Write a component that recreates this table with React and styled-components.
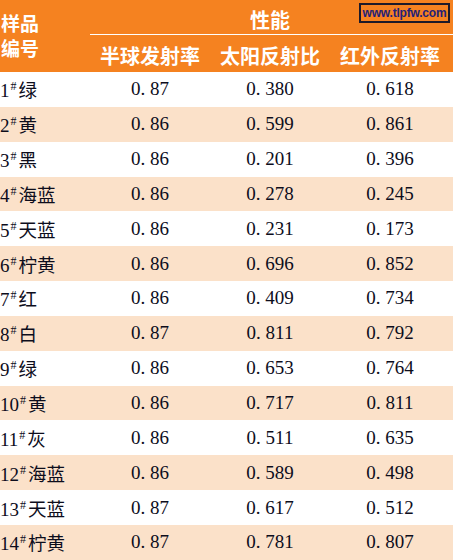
import React from "react";
import styled, { createGlobalStyle } from "styled-components";

const GlobalStyle = createGlobalStyle`
  html, body { margin: 0; padding: 0; background: #ffffff; }
  body { width: 453px; overflow: hidden; }
`;

const ORANGE = "#F58220";
const PEACH = "#FBE1C9";

const Table = styled.div`
  position: relative;
  width: 453px;
  font-family: "Liberation Serif", "Noto Sans CJK SC", serif;
`;

const Header = styled.div`
  display: grid;
  grid-template-columns: 90px 1fr;
  grid-template-rows: 34px 1px 37px;
  background: ${ORANGE};
  color: #ffffff;
  font-family: "Noto Sans CJK SC", sans-serif;
  font-weight: 700;
`;

const RowLabelHead = styled.div`
  grid-row: 1 / 4;
  grid-column: 1;
  padding: 10px 0 0 1px;
  font-size: 19px;
  line-height: 25px;
`;

const GroupHead = styled.div`
  grid-row: 1;
  grid-column: 2;
  display: flex;
  justify-content: center;
  align-items: center;
  padding: 4px 3px 0 0;
  font-size: 20px;
`;

const Rule = styled.div`
  grid-row: 2;
  grid-column: 2;
  background: #ffffff;
`;

const SubHeads = styled.div`
  grid-row: 3;
  grid-column: 2;
  display: grid;
  grid-template-columns: 120px 120px 120px;
  align-items: center;
  padding-top: 4px;
  font-size: 20px;
`;

const SubHead = styled.div`
  text-align: center;
  white-space: nowrap;
`;

const Watermark = styled.div`
  position: absolute;
  left: 359px;
  top: 3px;
  width: 87px;
  height: 16px;
  border: 2px solid #1d1a2a;
  display: flex;
  align-items: center;
  justify-content: center;
  font-family: "Liberation Sans", Arial, sans-serif;
  font-weight: 700;
  font-size: 12px;
  letter-spacing: -0.2px;
  color: #231f78;
`;

const Row = styled.div`
  display: grid;
  grid-template-columns: 90px 120px 120px 120px;
  align-items: center;
  height: 34.85px;
  background: ${(p) => (p.$alt ? PEACH : "#ffffff")};
  color: #0d0d1c;
`;

const Label = styled.div`
  display: flex;
  align-items: baseline;
  white-space: nowrap;
`;

const Num = styled.span`
  font-family: "Liberation Serif", serif;
  font-size: 19px;
`;

const Sup = styled.span`
  font-family: "Liberation Serif", serif;
  font-size: 12px;
  position: relative;
  top: -7px;
  margin: 0 2px 0 1px;
`;

const Cjk = styled.span`
  font-family: "Noto Sans CJK SC", sans-serif;
  font-size: 18.5px;
`;

const Value = styled.div`
  text-align: center;
  font-family: "Liberation Serif", serif;
  font-size: 19px;
  white-space: pre;
`;

const rows = [
  ["1", "绿", "87", "380", "618"],
  ["2", "黄", "86", "599", "861"],
  ["3", "黑", "86", "201", "396"],
  ["4", "海蓝", "86", "278", "245"],
  ["5", "天蓝", "86", "231", "173"],
  ["6", "柠黄", "86", "696", "852"],
  ["7", "红", "86", "409", "734"],
  ["8", "白", "87", "811", "792"],
  ["9", "绿", "86", "653", "764"],
  ["10", "黄", "86", "717", "811"],
  ["11", "灰", "86", "511", "635"],
  ["12", "海蓝", "86", "589", "498"],
  ["13", "天蓝", "87", "617", "512"],
  ["14", "柠黄", "87", "781", "807"],
];

export default function App() {
  return (
    <>
      <GlobalStyle />
      <Table>
        <Header>
          <RowLabelHead>
            样品
            <br />
            编号
          </RowLabelHead>
          <GroupHead>性能</GroupHead>
          <Rule />
          <SubHeads>
            <SubHead>半球发射率</SubHead>
            <SubHead>太阳反射比</SubHead>
            <SubHead>红外反射率</SubHead>
          </SubHeads>
        </Header>
        <Watermark>www.tlpfw.com</Watermark>
        {rows.map((r, i) => (
          <Row key={i} $alt={i % 2 === 1}>
            <Label>
              <Num>{r[0]}</Num>
              <Sup>#</Sup>
              <Cjk>{r[1]}</Cjk>
            </Label>
            <Value>{`0. ${r[2]}`}</Value>
            <Value>{`0. ${r[3]}`}</Value>
            <Value>{`0. ${r[4]}`}</Value>
          </Row>
        ))}
      </Table>
    </>
  );
}
